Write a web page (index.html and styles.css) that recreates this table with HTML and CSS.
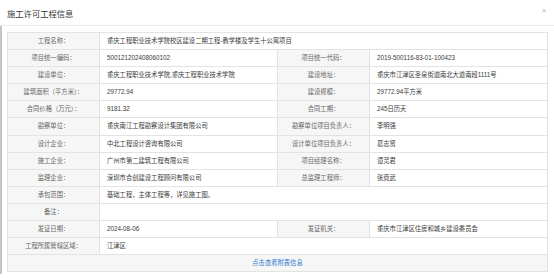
FILE: index.html
```html
<!DOCTYPE html>
<html lang="zh-CN">
<head>
    <meta charset="utf-8">
    <title>施工许可工程信息</title>
    <link rel="stylesheet" href="styles.css">
</head>
<body>
    <div class="dialog">
        <div class="dialog-header">
            <span class="dialog-title">施工许可工程信息</span>
            <span class="dialog-close">&times;</span>
        </div>

        <div class="dialog-body">
            <table class="info-table">
                <colgroup>
                    <col class="col-label">
                    <col class="col-value">
                    <col class="col-label">
                    <col class="col-value">
                </colgroup>
                <tr>
                    <td class="label">工程名称：</td>
                    <td class="value" colspan="3">重庆工程职业技术学院校区建设二期工程-教学楼及学生十公寓项目</td>
                </tr>
                <tr>
                    <td class="label">项目统一编码：</td>
                    <td class="value">500121202408060102</td>
                    <td class="label">项目统一代码：</td>
                    <td class="value">2019-500116-83-01-100423</td>
                </tr>
                <tr>
                    <td class="label">建设单位：</td>
                    <td class="value">重庆工程职业技术学院,重庆工程职业技术学院</td>
                    <td class="label">建设地址：</td>
                    <td class="value">重庆市江津区圣泉街道南北大道南段1111号</td>
                </tr>
                <tr>
                    <td class="label">建筑面积（平方米）：</td>
                    <td class="value">29772.94</td>
                    <td class="label">建设规模：</td>
                    <td class="value">29772.94平方米</td>
                </tr>
                <tr>
                    <td class="label">合同价格（万元）：</td>
                    <td class="value">9181.32</td>
                    <td class="label">合同工期：</td>
                    <td class="value">245日历天</td>
                </tr>
                <tr>
                    <td class="label">勘察单位：</td>
                    <td class="value">重庆南江工程勘察设计集团有限公司</td>
                    <td class="label">勘察单位项目负责人：</td>
                    <td class="value">李明强</td>
                </tr>
                <tr>
                    <td class="label">设计企业：</td>
                    <td class="value">中北工程设计咨询有限公司</td>
                    <td class="label">设计单位项目负责人：</td>
                    <td class="value">葛志贤</td>
                </tr>
                <tr>
                    <td class="label">施工企业：</td>
                    <td class="value">广州市第二建筑工程有限公司</td>
                    <td class="label">项目经理名称：</td>
                    <td class="value">谭灵君</td>
                </tr>
                <tr>
                    <td class="label">监理企业：</td>
                    <td class="value">深圳市合创建设工程顾问有限公司</td>
                    <td class="label">总监理工程师：</td>
                    <td class="value">张竟武</td>
                </tr>
                <tr>
                    <td class="label">承包范围：</td>
                    <td class="value" colspan="3">基础工程，主体工程等，详见施工图。</td>
                </tr>
                <tr>
                    <td class="label">备注：</td>
                    <td class="value" colspan="3"></td>
                </tr>
                <tr>
                    <td class="label">发证日期：</td>
                    <td class="value">2024-08-06</td>
                    <td class="label">发证机关：</td>
                    <td class="value">重庆市江津区住房和城乡建设委员会</td>
                </tr>
                <tr>
                    <td class="label">工程所属管辖区域：</td>
                    <td class="value" colspan="3">江津区</td>
                </tr>
                <tr>
                    <td class="more" colspan="4"><a href="#" class="more-link">点击查看附表信息</a></td>
                </tr>
            </table>
        </div>
    </div>
</body>
</html>
```

FILE: styles.css
```css
* {
    margin: 0;
    padding: 0;
    box-sizing: border-box;
}

body {
    font-family: "Liberation Sans", "Noto Sans CJK SC", sans-serif;
    background: #fff;
    color: #333;
}

.dialog {
    width: 554px;
    height: 278px;
    background: #fff;
}

.dialog-header {
    height: 26px;
    padding: 0 8px 0 7px;
    border-bottom: 1px solid #ebebeb;
    display: flex;
    align-items: center;
    justify-content: space-between;
}

.dialog-title {
    font-size: 8.3px;
    color: #333;
}

.dialog-close {
    font-size: 7px;
    color: #aaa;
    margin-top: -5px;
}

.dialog-body {
    margin-right: 2px;
    padding: 6px 5px 0;
    height: 248px;
    border-left: 2px solid #c4c4c4;
}

.info-table {
    width: 540px;
    border-collapse: collapse;
    table-layout: fixed;
    font-size: 6.3px;
}

.col-label {
    width: 92px;
}

.col-value {
    width: 178px;
}

.info-table td {
    border: 1px solid #e3e3e3;
    line-height: 16.1px;
    height: 16.1px;
    white-space: nowrap;
    overflow: hidden;
}

.label {
    background: #f6f6f6;
    color: #666;
    text-align: center;
}

.value {
    background: #fff;
    color: #3a3a3a;
    padding-left: 7px;
}

.more {
    background: #f6f6f6;
    text-align: center;
}

.more-link {
    color: #2f7bd0;
    text-decoration: none;
}
```
